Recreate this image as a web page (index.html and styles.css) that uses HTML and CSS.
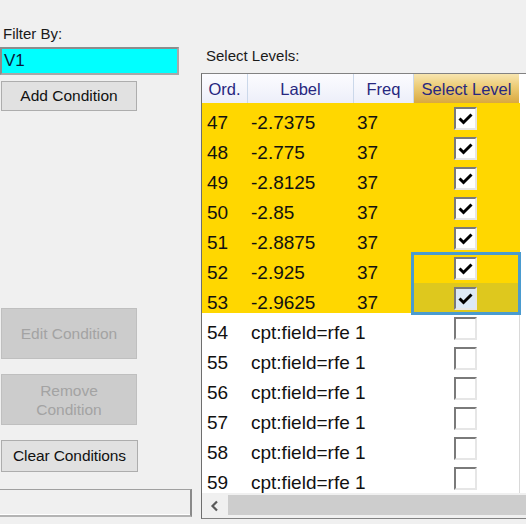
FILE: index.html
```html
<!DOCTYPE html>
<html>
<head>
<meta charset="utf-8">
<link rel="stylesheet" href="styles.css">
</head>
<body>
<div class="app">
  <div class="left">
    <div class="lbl">Filter By:</div>
    <div class="filter">V1</div>
    <div class="btn add">Add Condition</div>
    <div class="btn dis edit">Edit Condition</div>
    <div class="btn dis remove">Remove<br>Condition</div>
    <div class="btn clear">Clear Conditions</div>
    <div class="status"></div>
  </div>
  <div class="right">
    <div class="lbl2">Select Levels:</div>
    <div class="grid">
      <div class="row head">
        <div class="hc">Ord.</div>
        <div class="hc">Label</div>
        <div class="hc">Freq</div>
        <div class="hc sel">Select Level</div>
        <div class="fill"></div>
      </div>
      <div class="gbody">
        <div class="row y"><div class="c">47</div><div class="c">-2.7375</div><div class="c">37</div><div class="c cbc"><span class="cb"><svg width="19" height="19" viewBox="0 0 19 19"><path d="M3.5 9.5 L7.5 13.5 L15.5 5.5" fill="none" stroke="#000" stroke-width="3"/></svg></span></div><div class="fill"></div></div>
        <div class="row y"><div class="c">48</div><div class="c">-2.775</div><div class="c">37</div><div class="c cbc"><span class="cb"><svg width="19" height="19" viewBox="0 0 19 19"><path d="M3.5 9.5 L7.5 13.5 L15.5 5.5" fill="none" stroke="#000" stroke-width="3"/></svg></span></div><div class="fill"></div></div>
        <div class="row y"><div class="c">49</div><div class="c">-2.8125</div><div class="c">37</div><div class="c cbc"><span class="cb"><svg width="19" height="19" viewBox="0 0 19 19"><path d="M3.5 9.5 L7.5 13.5 L15.5 5.5" fill="none" stroke="#000" stroke-width="3"/></svg></span></div><div class="fill"></div></div>
        <div class="row y"><div class="c">50</div><div class="c">-2.85</div><div class="c">37</div><div class="c cbc"><span class="cb"><svg width="19" height="19" viewBox="0 0 19 19"><path d="M3.5 9.5 L7.5 13.5 L15.5 5.5" fill="none" stroke="#000" stroke-width="3"/></svg></span></div><div class="fill"></div></div>
        <div class="row y"><div class="c">51</div><div class="c">-2.8875</div><div class="c">37</div><div class="c cbc"><span class="cb"><svg width="19" height="19" viewBox="0 0 19 19"><path d="M3.5 9.5 L7.5 13.5 L15.5 5.5" fill="none" stroke="#000" stroke-width="3"/></svg></span></div><div class="fill"></div></div>
        <div class="row y"><div class="c">52</div><div class="c">-2.925</div><div class="c">37</div><div class="c cbc"><span class="cb"><svg width="19" height="19" viewBox="0 0 19 19"><path d="M3.5 9.5 L7.5 13.5 L15.5 5.5" fill="none" stroke="#000" stroke-width="3"/></svg></span></div><div class="fill"></div></div>
        <div class="row y"><div class="c">53</div><div class="c">-2.9625</div><div class="c">37</div><div class="c cbc cur"><span class="cb hot"><svg width="19" height="19" viewBox="0 0 19 19"><path d="M3.5 9.5 L7.5 13.5 L15.5 5.5" fill="none" stroke="#000" stroke-width="3"/></svg></span></div><div class="fill"></div></div>
        <div class="row w"><div class="c">54</div><div class="c">cpt:field=rfe 1</div><div class="c"></div><div class="c cbc"><span class="cb"></span></div><div class="fill"></div></div>
        <div class="row w"><div class="c">55</div><div class="c">cpt:field=rfe 1</div><div class="c"></div><div class="c cbc"><span class="cb"></span></div><div class="fill"></div></div>
        <div class="row w"><div class="c">56</div><div class="c">cpt:field=rfe 1</div><div class="c"></div><div class="c cbc"><span class="cb"></span></div><div class="fill"></div></div>
        <div class="row w"><div class="c">57</div><div class="c">cpt:field=rfe 1</div><div class="c"></div><div class="c cbc"><span class="cb"></span></div><div class="fill"></div></div>
        <div class="row w"><div class="c">58</div><div class="c">cpt:field=rfe 1</div><div class="c"></div><div class="c cbc"><span class="cb"></span></div><div class="fill"></div></div>
        <div class="row w"><div class="c">59</div><div class="c">cpt:field=rfe 1</div><div class="c"></div><div class="c cbc"><span class="cb"></span></div><div class="fill"></div></div>
        <div class="selbox"></div>
      </div>
      <div class="hscroll">
        <div class="arrow"><svg width="10" height="12" viewBox="0 0 10 12"><path d="M7 1.5 L2.5 6 L7 10.5" fill="none" stroke="#5a5a5a" stroke-width="2.2"/></svg></div>
        <div class="thumb"></div>
      </div>
    </div>
  </div>
</div>
</body>
</html>
```

FILE: styles.css
```css
html, body {
  margin: 0;
  padding: 0;
}
body {
  background: #f0f0f0;
  font-family: "Liberation Sans", Arial, sans-serif;
  color: #000;
  width: 526px;
  height: 524px;
  overflow: hidden;
}
.app {
  display: flex;
  height: 524px;
}
.left {
  width: 201px;
  flex: none;
  display: flex;
  flex-direction: column;
  align-items: flex-start;
}
.lbl {
  margin: 25px 0 0 3px;
  font-size: 15px;
  line-height: 17px;
  color: #1a1a1a;
}
.filter {
  box-sizing: border-box;
  margin-top: 5px;
  width: 179px;
  height: 28px;
  background: #00ffff;
  border: 2px solid #8c8c8c;
  border-right-color: #a8a8a8;
  border-bottom-color: #a8a8a8;
  font-size: 17px;
  line-height: 24px;
  padding-left: 2px;
  color: #0a1a3a;
}
.btn {
  box-sizing: border-box;
  margin-left: 1px;
  width: 136px;
  background: #e1e1e1;
  border: 1px solid #adadad;
  font-size: 15.5px;
  text-align: center;
  display: flex;
  align-items: center;
  justify-content: center;
  color: #111;
}
.add {
  margin-top: 6px;
  height: 30px;
}
.dis {
  background: #cccccc;
  border-color: #bfbfbf;
  color: #a3a3a3;
  height: 51px;
  line-height: 19px;
}
.edit {
  margin-top: 197px;
}
.remove {
  margin-top: 15px;
}
.clear {
  margin-top: 15px;
  height: 32px;
  width: 137px;
  letter-spacing: -0.1px;
}
.status {
  box-sizing: border-box;
  margin: 17px 0 0 -3px;
  width: 195px;
  height: 28px;
  border-top: 1px solid #a0a0a0;
  border-right: 2px solid #8a8a8a;
  border-bottom: 2px solid #b4b4b4;
  box-shadow: inset 0 -1px 0 #fff;
}
.right {
  flex: 1;
  min-width: 0;
  overflow: hidden;
}
.lbl2 {
  margin: 47px 0 0 5px;
  font-size: 15px;
  line-height: 17px;
  color: #1a1a1a;
}
.grid {
  box-sizing: border-box;
  margin-top: 9px;
  width: 100%;
  border-top: 1px solid #828282;
  border-left: 1px solid #6e6e6e;
  border-bottom: 1px solid #828282;
  background: #fff;
}
.row {
  display: grid;
  grid-template-columns: 46px 106px 60px 106px 1fr;
}
.head {
  height: 29px;
}
.hc {
  box-sizing: border-box;
  background: linear-gradient(#fcfcff, #eceef9);
  border-right: 1px solid #cbd8ea;
  color: #27277f;
  font-size: 16.5px;
  line-height: 27px;
  padding-top: 2px;
  text-align: center;
  white-space: nowrap;
}
.hc.sel {
  background: linear-gradient(#f7e5b0, #eccb74 45%, #d9a840);
  border-right: none;
  border-bottom: 1px solid #c8952f;
  width: 105px;
}
.fill {
  background: #fff;
}
.gbody {
  position: relative;
}
.row.y .c {
  background: #ffd700;
}
.c {
  box-sizing: border-box;
  height: 30px;
  font-size: 19px;
  line-height: 20px;
  padding-top: 10px;
  white-space: nowrap;
  color: #111;
}
.row .c:nth-child(1) {
  padding-left: 5px;
}
.row .c:nth-child(2) {
  padding-left: 3px;
}
.row .c:nth-child(3) {
  padding-left: 3px;
}
.c.cbc {
  padding: 4px 0 0 0;
  display: flex;
  justify-content: center;
  padding-right: 3px;
}
.row.w .c.cbc {
  border-right: 1px solid #d9d9d9;
}
.row.y .c.cur {
  background: #dec81e;
}
.cb {
  box-sizing: border-box;
  width: 23px;
  height: 23px;
  background: #fff;
  border: 2px solid #e6e6e6;
  border-top-color: #7a7a7a;
  border-left-color: #7a7a7a;
  display: block;
}
.cb svg {
  display: block;
}
.cb.hot {
  background: #dce9f6;
}
.selbox {
  position: absolute;
  left: 209px;
  top: 149px;
  width: 110px;
  height: 63px;
  box-sizing: border-box;
  border: 3px solid #4a9bcf;
}
.hscroll {
  height: 25px;
  background: #f0f0f0;
  display: flex;
}
.arrow {
  width: 25px;
  display: flex;
  align-items: center;
  justify-content: center;
}
.thumb {
  flex: 1;
  margin: 2px 0 3px 1px;
  background: #cdcdcd;
}
```
